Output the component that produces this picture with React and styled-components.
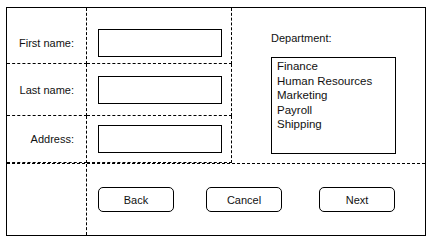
import React from 'react';
import styled, { createGlobalStyle } from 'styled-components';

const GlobalStyle = createGlobalStyle`
  html, body {
    margin: 0;
    padding: 0;
    background: #fff;
  }
  body {
    font-family: "Liberation Sans", Arial, sans-serif;
    font-size: 11px;
    color: #111;
  }
`;

const Frame = styled.div`
  margin: 7px 0 0 6px;
  width: 420px;
  height: 229px;
  box-sizing: border-box;
  border: 1px solid #000;
  display: grid;
  grid-template-columns: 80px 145px 1fr;
  grid-template-rows: 56px 52px 47px 1fr;
`;

const dash = '1px dashed #000';

const LabelCell = styled.div`
  grid-column: 1;
  border-right: ${dash};
  border-bottom: ${props => (props.$last ? 'none' : dash)};
  display: flex;
  justify-content: flex-end;
  align-items: ${props => (props.$top ? 'flex-end' : 'center')};
  padding: ${props => (props.$top ? '0 12px 14px 0' : '0 12px 0 0')};
`;

const InputCell = styled.div`
  grid-column: 2;
  border-right: ${dash};
  border-bottom: ${props => (props.$last ? 'none' : dash)};
  display: flex;
  align-items: ${props => (props.$top ? 'flex-end' : 'center')};
  padding: ${props => (props.$top ? '0 0 6px 11px' : '0 0 0 11px')};
`;

const TextBox = styled.div`
  width: 124px;
  height: 28px;
  box-sizing: border-box;
  border: 1px solid #000;
`;

const DeptCell = styled.div`
  grid-column: 3;
  grid-row: 1 / span 3;
  padding: 23px 0 0 39px;
  display: flex;
  flex-direction: column;
`;

const DeptLabel = styled.div`
  line-height: 14px;
  margin-bottom: 12px;
`;

const ListBox = styled.ul`
  list-style: none;
  margin: 0;
  padding: 1px 0 0 5px;
  width: 125px;
  height: 97px;
  box-sizing: border-box;
  border: 1px solid #000;
  font-size: 11.5px;

  li {
    line-height: 14.5px;
  }
`;

const BottomRow = styled.div`
  grid-column: 1 / span 3;
  border-top: ${dash};
  display: grid;
  grid-template-columns: 80px 1fr;
`;

const BottomLeft = styled.div`
  border-right: ${dash};
`;

const ButtonBar = styled.div`
  display: flex;
  align-items: center;
  padding-left: 11px;
`;

const Button = styled.button`
  width: 76px;
  height: 25px;
  box-sizing: border-box;
  border: 1px solid #000;
  border-radius: 5px;
  background: #fff;
  font-family: inherit;
  font-size: 11px;
  color: #111;
  padding: 0;
  margin-left: ${props => props.$gap || 0}px;
`;

const fields = ['First name:', 'Last name:', 'Address:'];
const departments = ['Finance', 'Human Resources', 'Marketing', 'Payroll', 'Shipping'];

export default function App() {
  return (
    <>
      <GlobalStyle />
      <Frame>
        {fields.map((label, i) => (
          <React.Fragment key={label}>
            <LabelCell $top={i === 0} style={{ gridRow: i + 1 }}>
              {label}
            </LabelCell>
            <InputCell $top={i === 0} style={{ gridRow: i + 1 }}>
              <TextBox />
            </InputCell>
          </React.Fragment>
        ))}
        <DeptCell>
          <DeptLabel>Department:</DeptLabel>
          <ListBox>
            {departments.map(d => (
              <li key={d}>{d}</li>
            ))}
          </ListBox>
        </DeptCell>
        <BottomRow>
          <BottomLeft />
          <ButtonBar>
            <Button>Back</Button>
            <Button $gap={32}>Cancel</Button>
            <Button $gap={37}>Next</Button>
          </ButtonBar>
        </BottomRow>
      </Frame>
    </>
  );
}
